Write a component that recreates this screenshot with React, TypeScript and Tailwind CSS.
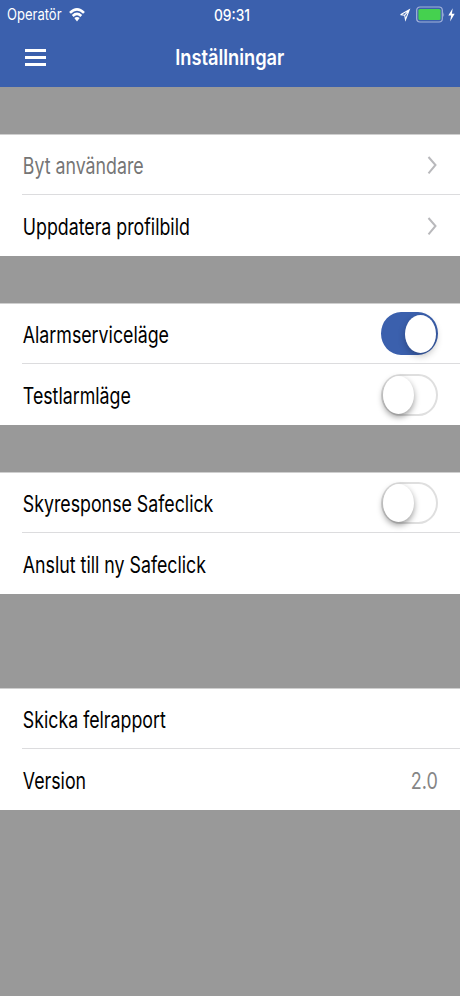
import { useState } from 'react';

interface RowProps { label: string; muted?: boolean; last?: boolean; children?: React.ReactNode; }

const Row = ({ label, muted, last, children }: RowProps) => (
  <div className="pl-[22px]">
    <div className={`flex items-center justify-between pr-[22px] ${last ? 'h-[61px] pt-px' : 'h-[60px] border-b border-[#dcdcde]'}`}>
      <span className={`origin-left scale-x-[0.79] whitespace-nowrap pl-px pt-0.5 text-[22.5px] leading-7 ${muted ? 'text-[#757575]' : 'text-black'}`}>{label}</span>
      {children}
    </div>
  </div>
);

const Section = ({ children }: { children: React.ReactNode }) => (
  <section className="border-t border-[#cfcfcf] bg-white">{children}</section>
);

const Chevron = () => (
  <svg width="12" height="20" viewBox="0 0 12 20" fill="none" stroke="#b9b9bc" strokeWidth="2">
    <path d="M2.5 2 L9.5 10 L2.5 18.3" />
  </svg>
);

const Toggle = ({ on, onChange }: { on: boolean; onChange: () => void }) => (
  <button
    role="switch"
    aria-checked={on}
    onClick={onChange}
    className={`flex w-[57px] shrink-0 items-center rounded-[20px/21.5px] border-2 ${on ? 'h-[43px] justify-end border-[#3b60ad] bg-[#3b60ad]' : 'h-[42px] justify-start border-[#dfdfdf] bg-white'}`}
  >
    <span className={`h-[38px] w-[31px] rounded-[50%] bg-white ${on ? 'shadow-[0_3px_7px_rgba(0,0,0,0.25)]' : 'shadow-[0_3px_6px_rgba(0,0,0,0.4)]'}`} />
  </button>
);

export default function App() {
  const [alarm, setAlarm] = useState(true);
  const [test, setTest] = useState(false);
  const [safeclick, setSafeclick] = useState(false);

  return (
    <div className="min-h-[996px] w-full overflow-hidden bg-[#999999] font-['Inter',sans-serif]">
      <header className="h-[87px] bg-[#3b60ad] text-white">
        {/* status bar */}
        <div className="grid h-[29px] grid-cols-3 items-center">
          <div className="flex items-center pl-[7px]">
            <span className="w-[62px] origin-left scale-x-[0.84] text-[15.5px] leading-5">Operatör</span>
            <svg width="16" height="14" viewBox="0 0 16 14" fill="none" stroke="white" strokeWidth="2.6">
              <path d="M1 4.9 Q8 -2 15 4.9" />
              <path d="M3.7 8 Q8 3.9 12.3 8" />
              <path d="M8 13.4 L5.3 10.1 Q8 7.7 10.7 10.1 Z" fill="white" stroke="none" />
            </svg>
          </div>
          <div className="flex justify-center pl-[4px]">
            <span className="scale-x-[0.86] text-base leading-5 font-medium">09:31</span>
          </div>
          <div className="flex items-center justify-end pr-[5px]">
            <svg width="12" height="14" viewBox="0 0 12 14" fill="none" stroke="white" strokeWidth="1.1">
              <path d="M1.5 6.8 L10.3 1.8 L6.5 11.8 L5.7 7.2 L10.3 1.8 M1.5 6.8 L5.7 7.2" />
            </svg>
            <svg className="ml-[5px]" width="29" height="17" viewBox="0 0 29 17">
              <rect x="0.7" y="1" width="25.6" height="15" rx="3.2" fill="none" stroke="#a4b4da" strokeWidth="1.2" />
              <rect x="2.4" y="2.9" width="22.2" height="11.2" rx="1.5" fill="#45d14f" />
              <path d="M27.4 6 Q28.7 8.5 27.4 11 Z" fill="#a4b4da" />
            </svg>
            <svg className="ml-[3px]" width="7" height="14" viewBox="0 0 7 14" fill="white">
              <path d="M4.7 0.3 L0.3 7.6 H3.1 L2.1 13.6 L6.7 5.8 H3.9 Z" />
            </svg>
          </div>
        </div>
        {/* title bar */}
        <div className="grid h-[56px] grid-cols-3 items-center">
          <div className="ml-[25px] flex w-[21px] flex-col gap-[4px]">
            <span className="h-[3px] bg-white" />
            <span className="h-[3px] bg-white" />
            <span className="h-[3px] bg-white" />
          </div>
          <h1 className="flex justify-center">
            <span className="scale-x-[0.83] text-[22px] leading-7 font-semibold">Inställningar</span>
          </h1>
        </div>
      </header>

      <main className="pt-[47px]">
        <Section>
          <Row label="Byt användare" muted><Chevron /></Row>
          <Row label="Uppdatera profilbild" last><Chevron /></Row>
        </Section>
        <div className="h-[47px]" />
        <Section>
          <Row label="Alarmserviceläge"><Toggle on={alarm} onChange={() => setAlarm(!alarm)} /></Row>
          <Row label="Testlarmläge" last><Toggle on={test} onChange={() => setTest(!test)} /></Row>
        </Section>
        <div className="h-[47px]" />
        <Section>
          <Row label="Skyresponse Safeclick"><Toggle on={safeclick} onChange={() => setSafeclick(!safeclick)} /></Row>
          <Row label="Anslut till ny Safeclick" last />
        </Section>
        <div className="h-[94px]" />
        <Section>
          <Row label="Skicka felrapport" />
          <Row label="Version" last>
            <span className="origin-right scale-x-[0.8] pt-0.5 text-[22.5px] leading-7 text-[#858585]">2.0</span>
          </Row>
        </Section>
      </main>
    </div>
  );
}
